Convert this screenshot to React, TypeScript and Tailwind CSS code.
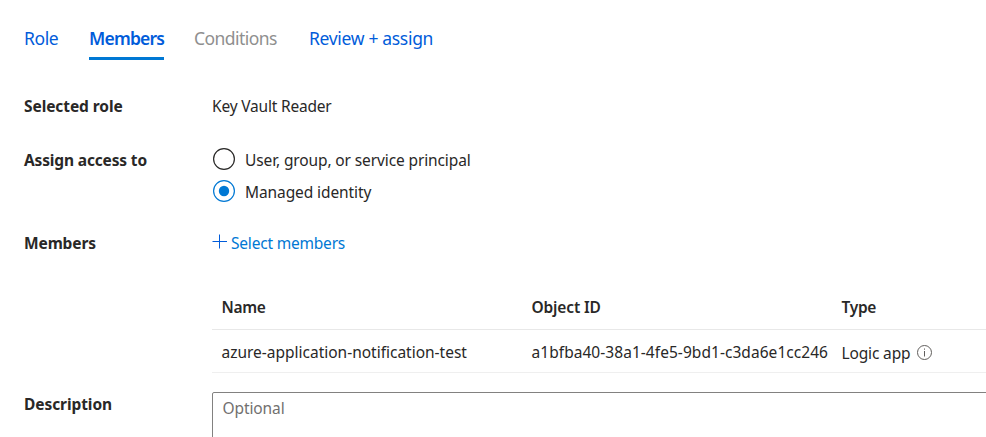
import type { ReactNode } from 'react';

function Field({ label, labelClass, className, children }: { label: string; labelClass: string; className: string; children: ReactNode }) {
  return (
    <div className={`flex items-start ${className}`}>
      <div className="w-[188px] shrink-0 font-bold">
        <span className={labelClass}>{label}</span>
      </div>
      <div className="min-w-0 flex-1">{children}</div>
    </div>
  );
}

function Radio({ checked, children }: { checked?: boolean; children: ReactNode }) {
  return (
    <label className="flex h-8 items-start">
      <svg className="mr-[10px] -mt-[2px] ml-px shrink-0" width="22" height="22" viewBox="0 0 22 22" fill="none">
        <circle cx="11" cy="11" r="10.4" stroke={checked ? '#0078d4' : '#292827'} strokeWidth="1.2" />
        {checked && <circle cx="11" cy="11" r="5.2" fill="#0078d4" />}
      </svg>
      {children}
    </label>
  );
}

export default function App() {
  return (
    <main className="h-[437px] w-[986px] overflow-hidden bg-white pl-6 font-['Noto_Sans',sans-serif] text-[15.5px] leading-5 whitespace-nowrap text-[#292827]">
      <nav className="flex h-[60px] items-end text-[17.5px] leading-[22px] text-[#015cda]">
        <a className="h-[33px] w-[65px]"><span className="tracking-[-0.4px]">Role</span></a>
        <a className="h-[33px] w-[75px] border-b-[3px] border-[#0078d4] font-semibold"><span className="tracking-[-0.8px]">Members</span></a>
        <a className="ml-[30px] h-[33px] w-[115px] text-[#8f8f8f]"><span className="tracking-[-0.55px]">Conditions</span></a>
        <a className="h-[33px]"><span className="tracking-[-0.32px]">Review + assign</span></a>
      </nav>

      <Field label="Selected role" labelClass="tracking-[-0.08px]" className="mt-9 h-[54px]">
        <span className="tracking-[-0.19px]">Key Vault Reader</span>
      </Field>
      <Field label="Assign access to" labelClass="tracking-[-0.15px]" className="h-[83px]">
        <Radio><span className="tracking-[-0.12px]">User, group, or service principal</span></Radio>
        <Radio checked><span className="tracking-[-0.1px]">Managed identity</span></Radio>
      </Field>
      <Field label="Members" labelClass="tracking-[-0.12px]" className="h-[52px]">
        <a className="flex text-[#0078d4]">
          <svg className="mr-1 mt-[1px] shrink-0" width="15" height="15" viewBox="0 0 15 15" stroke="#015cda">
            <path d="M.5 7.5H15M7.5 .5V14.5" />
          </svg>
          <span className="tracking-[-0.2px]">Select members</span>
        </a>
      </Field>

      <div className="ml-[188px]">
        <div className="grid h-[45px] grid-cols-[310px_310px_1fr] border-b border-[#e8e8e8] pl-[9.5px] pt-3 font-semibold">
          <span className="tracking-[-0.3px]">Name</span>
          <span className="tracking-[-0.15px]">Object ID</span>
          <span className="tracking-[-0.3px]">Type</span>
        </div>
        <div className="grid h-[43px] grid-cols-[310px_310px_1fr] border-b border-[#efefef] pl-[9.5px] pt-3">
          <span className="tracking-[-0.01px]">azure-application-notification-test</span>
          <span className="tracking-[0.05px]">a1bfba40-38a1-4fe5-9bd1-c3da6e1cc246</span>
          <span className="flex pt-px">
            <span className="w-[75.5px] tracking-[-0.15px]">Logic app</span>
            <svg className="mt-[2px] shrink-0" width="15" height="15" viewBox="0 0 15 15" fill="none" stroke="#605e5c">
              <circle cx="7.5" cy="7.5" r="7" />
              <path d="M7.5 6V11.5M7.5 3.5V4.7" />
            </svg>
          </span>
        </div>
      </div>

      <Field label="Description" labelClass="tracking-[-0.08px]" className="mt-[21px] h-12">
        <div className="-mt-[2px] h-16 w-[800px] rounded-[2px] border border-[#828180] pl-[9.5px] pt-[5px] tracking-[-0.1px] text-[#72706f]">
          Optional
        </div>
      </Field>
    </main>
  );
}
